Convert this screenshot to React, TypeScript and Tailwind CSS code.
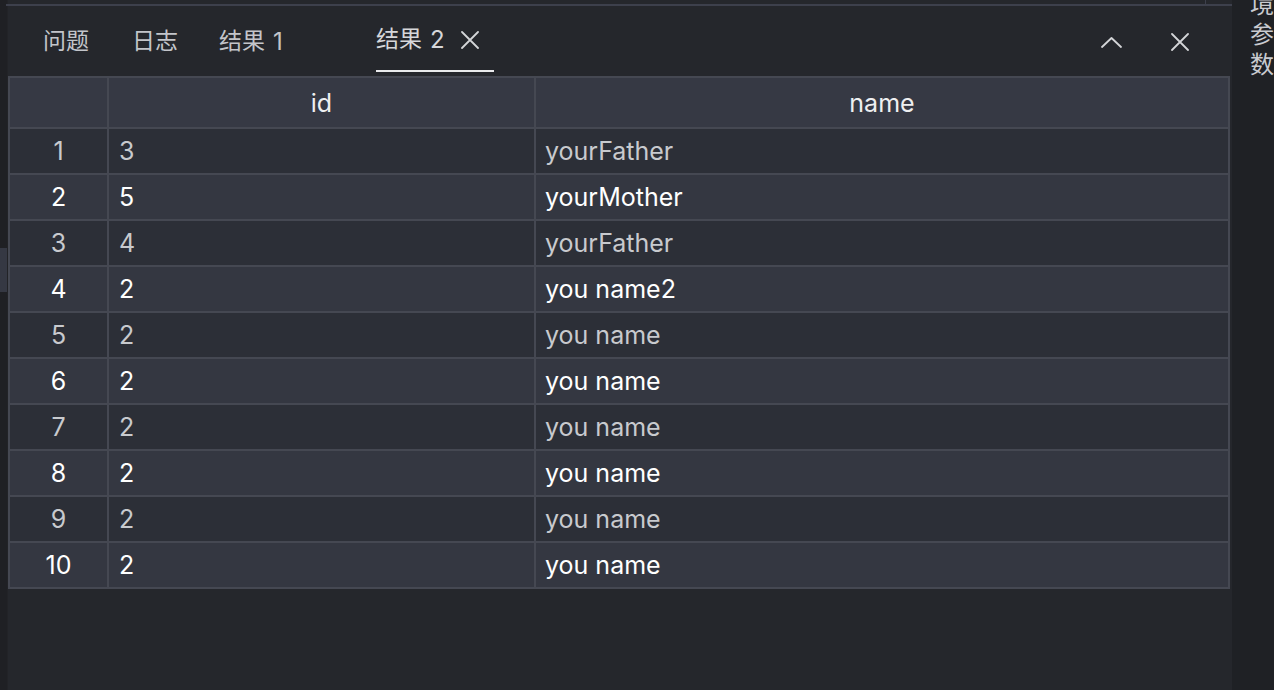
import React from "react";

const rows: [string, string, string][] = [
  ["1", "3", "yourFather"],
  ["2", "5", "yourMother"],
  ["3", "4", "yourFather"],
  ["4", "2", "you name2"],
  ["5", "2", "you name"],
  ["6", "2", "you name"],
  ["7", "2", "you name"],
  ["8", "2", "you name"],
  ["9", "2", "you name"],
  ["10", "2", "you name"],
];

const XIcon = ({ size = 18 }: { size?: number }) => (
  <svg width={size} height={size} viewBox="0 0 18 18" fill="none">
    <path d="M1 1 L17 17 M17 1 L1 17" stroke="#d4d5d8" strokeWidth="1.8" strokeLinecap="round" />
  </svg>
);

const ChevronUp = () => (
  <svg width="21" height="11" viewBox="0 0 21 11" fill="none">
    <path d="M1 10 L10.5 1 L20 10" stroke="#d4d5d8" strokeWidth="1.8" strokeLinecap="round" strokeLinejoin="round" />
  </svg>
);

export default function App() {
  const font = { fontFamily: 'Inter, "Noto Sans CJK SC", sans-serif' };
  return (
    <div
      className="flex h-[690px] w-[1274px] overflow-hidden bg-[#25272c] text-[#c9cbd0]"
      style={font}
    >
      {/* left strip */}
      <div className="flex w-[7px] flex-col bg-[#1f2024]">
        <div className="h-[248px]" />
        <div className="h-[44px] bg-[#353843]" />
      </div>
      <div className="w-[1px] bg-[#222327]" />

      {/* main */}
      <div className="flex w-[1224px] flex-col">
        <div className="relative h-[4px]">
          <div className="absolute left-[1197px] top-0 h-[4px] w-[1px] bg-[#3d404c]" />
        </div>
        <div className="ml-[-2px] h-[2px] bg-[#3d404c]" />

        {/* tabs */}
        <div className="flex h-[70px] items-stretch text-[23px]">
          <div className="ml-[35px] flex w-[89px] items-center pt-[1px] text-[#c3c5ca]">问题</div>
          <div className="flex w-[87px] items-center pt-[1px] text-[#c3c5ca]">日志</div>
          <div className="flex w-[157px] items-center pt-[1px] text-[#c3c5ca]">
            结果 <span className="ml-[8px] text-[24px]">1</span>
          </div>
          <div className="flex w-[118px] flex-col">
            <div className="flex flex-1 items-center pt-[3px] text-[#d6d7da]">
              <span>结果</span>
              <span className="ml-[8px] text-[24px]">2</span>
              <span className="ml-[16px] flex">
                <XIcon />
              </span>
            </div>
            <div className="mb-[4px] h-[2px] bg-[#e9eaec]" />
          </div>
          <div className="flex-1" />
          <div className="flex items-center pt-[2px]">
            <ChevronUp />
          </div>
          <div className="ml-[49px] mr-[43px] flex items-center pt-[1px]">
            <XIcon />
          </div>
        </div>

        {/* table */}
        <div className="w-[1222px] border-l-2 border-r-2 border-t-2 border-[#454852] text-[25px]">
          <div className="grid grid-cols-[99px_427px_1fr] bg-[#363944] text-[#eeeff1]">
            <div className="h-[51px] border-b-2 border-r-2 border-[#454852]" />
            <div className="flex h-[51px] items-center justify-center border-b-2 border-r-2 border-[#454852] pt-[2px]">id</div>
            <div className="flex h-[51px] items-center justify-center border-b-2 border-[#454852] pt-[2px]">name</div>
          </div>
          {rows.map(([n, id, name], i) => {
            const even = i % 2 === 1;
            return (
              <div
                key={n}
                className={
                  "grid grid-cols-[99px_427px_1fr] " +
                  (even ? "bg-[#343741] text-white" : "bg-[#2c2f37] text-[#c8cace]")
                }
              >
                <div className="flex h-[46px] items-center justify-center border-b-2 border-r-2 border-[#454852] pt-[2px]">{n}</div>
                <div className="flex h-[46px] items-center border-b-2 border-r-2 border-[#454852] pl-[10px] pt-[2px]">{id}</div>
                <div className="flex h-[46px] items-center border-b-2 border-[#454852] pl-[9px] pt-[2px]">{name}</div>
              </div>
            );
          })}
        </div>
      </div>

      {/* right panel */}
      <div className="flex flex-1 flex-col items-start overflow-hidden bg-[#1f2125] pl-[18px] text-[24px] leading-[30px] text-[#c9cbd0]">
        <div className="mt-[-10px]">境</div>
        <div>参</div>
        <div>数</div>
      </div>
    </div>
  );
}
